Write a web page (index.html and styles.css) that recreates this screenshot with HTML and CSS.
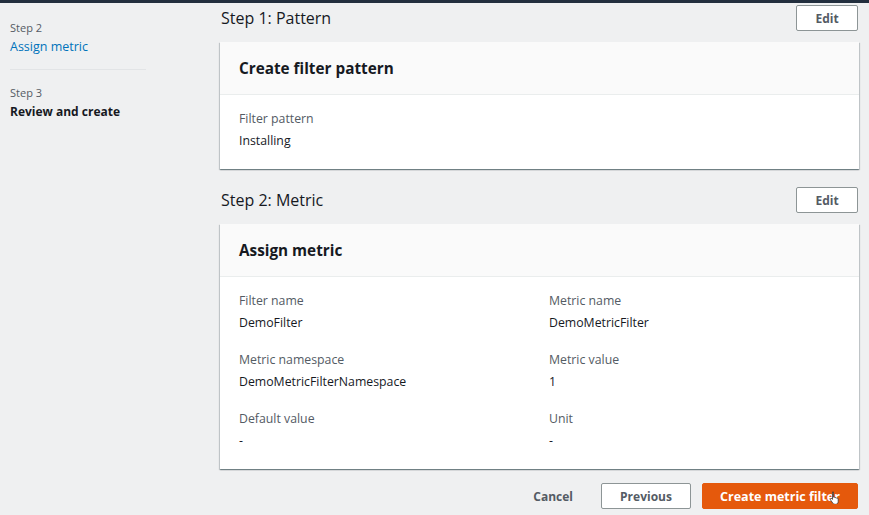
FILE: index.html
```html
<!DOCTYPE html>
<html lang="en">
<head>
<meta charset="utf-8">
<title>Create metric filter - Review</title>
<link rel="stylesheet" href="styles.css">
</head>
<body>
<div class="topbar"></div>
<div class="layout">
  <nav class="steps">
    <div class="step">
      <div class="step-num">Step 2</div>
      <div class="step-name link">Assign metric</div>
    </div>
    <div class="divider"></div>
    <div class="step">
      <div class="step-num">Step 3</div>
      <div class="step-name current">Review and create</div>
    </div>
  </nav>
  <main class="main">
    <div class="section-head">
      <h2 class="section-title">Step 1: Pattern</h2>
      <button class="btn">Edit</button>
    </div>
    <section class="card">
      <div class="card-head">Create filter pattern</div>
      <div class="card-body">
        <div class="kv">
          <div class="kv-label">Filter pattern</div>
          <div class="kv-value">Installing</div>
        </div>
      </div>
    </section>

    <div class="section-head second">
      <h2 class="section-title">Step 2: Metric</h2>
      <button class="btn">Edit</button>
    </div>
    <section class="card">
      <div class="card-head">Assign metric</div>
      <div class="card-body grid">
        <div class="kv">
          <div class="kv-label">Filter name</div>
          <div class="kv-value">DemoFilter</div>
        </div>
        <div class="kv">
          <div class="kv-label">Metric name</div>
          <div class="kv-value">DemoMetricFilter</div>
        </div>
        <div class="kv">
          <div class="kv-label">Metric namespace</div>
          <div class="kv-value">DemoMetricFilterNamespace</div>
        </div>
        <div class="kv">
          <div class="kv-label">Metric value</div>
          <div class="kv-value">1</div>
        </div>
        <div class="kv">
          <div class="kv-label">Default value</div>
          <div class="kv-value">-</div>
        </div>
        <div class="kv">
          <div class="kv-label">Unit</div>
          <div class="kv-value">-</div>
        </div>
      </div>
    </section>

    <div class="actions">
      <button class="btn-link">Cancel</button>
      <button class="btn btn-prev">Previous</button>
      <button class="btn btn-primary">Create metric filter<svg class="cursor" width="12" height="13" viewBox="0 0 12 13"><path d="M3.5 1.2c.6 0 1 .4 1 1v4l.4-.1c.5-.1 1 .2 1.1.6l.5-.1c.5-.1 1 .2 1.1.6l.5-.1c.6-.1 1.1.3 1.1.9v2.6c0 1.5-1.2 2.7-2.7 2.7H6c-.9 0-1.7-.4-2.200-1.1L1.5 8.9c-.3-.4-.2-1 .2-1.3.4-.3.9-.2 1.2.1l.6.7V2.2c0-.6.4-1 1-1z" fill="#fff" stroke="#333" stroke-width=".8"/></svg></button>
    </div>
  </main>
</div>
</body>
</html>
```

FILE: styles.css
```css
* { box-sizing: border-box; }

html, body {
  margin: 0;
  padding: 0;
  background: #eff0f1;
  font-family: "Open Sans", "Noto Sans", "Liberation Sans", sans-serif;
  color: #16191f;
}

.topbar {
  height: 3px;
  background: #232f3e;
}

.layout {
  display: flex;
  height: 512px;
}

.steps {
  width: 220px;
  flex: none;
  padding: 17px 0 0 10px;
}

.step-num {
  font-size: 11px;
  line-height: 16px;
  color: #545b64;
}

.step-name {
  font-size: 12.5px;
  line-height: 20px;
  margin-top: 1px;
}

.step-name.link {
  color: #0073bb;
}

.step-name.current {
  font-size: 12px;
  font-weight: 700;
  color: #16191f;
}

.divider {
  width: 136px;
  height: 1px;
  background: #e2e4e6;
  margin: 12px 0 15px;
}

.main {
  flex: 1;
  padding: 2px 10px 0 0;
  display: flex;
  flex-direction: column;
}

.section-head {
  display: flex;
  align-items: center;
  justify-content: space-between;
  height: 26px;
  margin-bottom: 11px;
}

.section-head.second {
  margin-top: 18px;
}

.section-title {
  margin: 0 0 0 1px;
  font-size: 16px;
  font-weight: 400;
  color: #16191f;
}

.btn {
  font-family: inherit;
  font-size: 12px;
  font-weight: 700;
  color: #545b64;
  background: #fff;
  border: 1px solid #8d9596;
  border-radius: 2px;
  height: 26px;
  width: 62px;
  margin-right: 1px;
  padding: 0;
  cursor: pointer;
}

.card {
  background: #fff;
  box-shadow: 0 1px 1px 0 rgba(0, 28, 36, 0.35), 1px 1px 1px 0 rgba(0, 28, 36, 0.15), -1px 1px 1px 0 rgba(0, 28, 36, 0.15);
}

.card-head {
  height: 53px;
  display: flex;
  align-items: center;
  padding-left: 19px;
  background: #fafafa;
  border-bottom: 1px solid #eaeded;
  font-size: 15.3px;
  font-weight: 700;
  color: #16191f;
}

.card-body {
  padding: 14px 19px 18px;
}

.card-body.grid {
  display: grid;
  grid-template-columns: 310px 1fr;
  row-gap: 17px;
}

.kv-label {
  font-size: 12.3px;
  line-height: 20px;
  color: #545b64;
}

.kv-value {
  font-size: 12.3px;
  line-height: 20px;
  margin-top: 2px;
  color: #16191f;
}

.actions {
  display: flex;
  justify-content: flex-end;
  align-items: center;
  margin-top: 14px;
  gap: 10px;
}

.btn-link {
  font-family: inherit;
  font-size: 12px;
  font-weight: 700;
  color: #545b64;
  background: none;
  border: none;
  padding: 0;
  margin-right: 18px;
  height: 26px;
}

.btn-prev {
  width: 90px;
}

.btn-primary {
  position: relative;
  width: 156px;
  background: #e5590c;
  border-color: #e5590c;
  color: #fff;
  font-size: 12.5px;
}

.cursor {
  position: absolute;
  right: 16px;
  top: 7px;
}
```
